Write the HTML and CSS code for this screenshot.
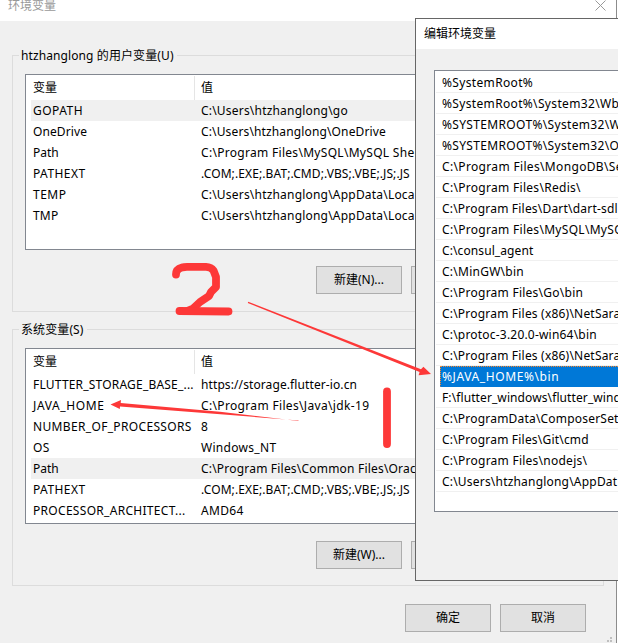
FILE: index.html
```html
<!DOCTYPE html>
<html lang="zh-CN">
<head>
<meta charset="utf-8">
<title>环境变量</title>
<link rel="stylesheet" href="styles.css">
</head>
<body>
<div class="window">
  <header class="titlebar"><span>环境变量</span>
    <svg class="close" width="11" height="11" viewBox="0 0 11 11"><path d="M.5.5l10 10M10.5.5l-10 10" fill="none" stroke="#999"/></svg>
  </header>
  <main class="content">
    <section class="group">
      <h2 class="legend t1">htzhanglong 的用户变量(U)</h2>
      <div class="list">
        <div class="head"><span>变量</span><span>值</span></div>
        <div class="row hot"><span class="t5">GOPATH</span><span class="t2">C:\Users\htzhanglong\go</span></div>
        <div class="row"><span class="t1">OneDrive</span><span class="t15">C:\Users\htzhanglong\OneDrive</span></div>
        <div class="row"><span>Path</span><span class="t3">C:\Program Files\MySQL\MySQL Shell</span></div>
        <div class="row"><span class="t4">PATHEXT</span><span class="t1">.COM;.EXE;.BAT;.CMD;.VBS;.VBE;.JS;.JS</span></div>
        <div class="row"><span class="t5">TEMP</span><span class="t2">C:\Users\htzhanglong\AppData\Loca</span></div>
        <div class="row"><span class="t2">TMP</span><span class="t2">C:\Users\htzhanglong\AppData\Loca</span></div>
      </div>
      <div class="actions"><button>新建(N)...</button><button></button></div>
    </section>
    <section class="group system">
      <h2 class="legend t1">系统变量(S)</h2>
      <div class="list">
        <div class="head"><span>变量</span><span>值</span></div>
        <div class="row"><span class="t2">FLUTTER_STORAGE_BASE_...</span><span class="t1">https://storage.flutter-io.cn</span></div>
        <div class="row"><span class="t6">JAVA_HOME</span><span class="t35">C:\Program Files\Java\jdk-19</span></div>
        <div class="row"><span class="t35">NUMBER_OF_PROCESSORS</span><span>8</span></div>
        <div class="row"><span class="t3">OS</span><span class="t3">Windows_NT</span></div>
        <div class="row hot"><span>Path</span><span class="t2">C:\Program Files\Common Files\Orac</span></div>
        <div class="row"><span class="t4">PATHEXT</span><span class="t1">.COM;.EXE;.BAT;.CMD;.VBS;.VBE;.JS;.JS</span></div>
        <div class="row"><span class="t3">PROCESSOR_ARCHITECT...</span><span class="t3">AMD64</span></div>
      </div>
      <div class="actions"><button>新建(W)...</button><button></button></div>
    </section>
    <footer class="confirm"><button>确定</button><button>取消</button></footer>
  </main>
  <svg class="grip" width="8" height="6" viewBox="0 0 8 6"><path d="M4 0h2v2H4zM1 3h2v2H1zM4 3h2v2H4z" fill="#bfbfbf"/></svg>
</div>

<div class="dialog">
  <header class="dialog-title">编辑环境变量</header>
  <div class="paths">
    <div class="t35">%SystemRoot%</div>
    <div class="t35">%SystemRoot%\System32\Wb</div>
    <div class="t35">%SYSTEMROOT%\System32\W</div>
    <div class="t35">%SYSTEMROOT%\System32\O</div>
    <div class="t35">C:\Program Files\MongoDB\Se</div>
    <div class="t3">C:\Program Files\Redis\</div>
    <div class="t2">C:\Program Files\Dart\dart-sdl</div>
    <div class="t3">C:\Program Files\MySQL\MySQ</div>
    <div class="t1">C:\consul_agent</div>
    <div class="t25">C:\MinGW\bin</div>
    <div class="t25">C:\Program Files\Go\bin</div>
    <div class="t2">C:\Program Files (x86)\NetSara</div>
    <div class="t2">C:\protoc-3.20.0-win64\bin</div>
    <div class="t2">C:\Program Files (x86)\NetSara</div>
    <div class="selected t6">%JAVA_HOME%\bin</div>
    <div class="t1">F:\flutter_windows\flutter_windo</div>
    <div class="t2">C:\ProgramData\ComposerSet</div>
    <div class="t2">C:\Program Files\Git\cmd</div>
    <div class="t25">C:\Program Files\nodejs\</div>
    <div class="t2">C:\Users\htzhanglong\AppDat</div>
  </div>
</div>

<svg class="marks" width="618" height="643" viewBox="0 0 618 643">
  <g fill="none" stroke="#fd3838" stroke-width="7.8" stroke-linecap="round" stroke-linejoin="round">
    <path d="M176 274.5Q176 269 182 267.5Q184 266.8 187 266.8H206Q211 267 213.5 270.5L216 277V287L211 292L209 296L200 302L193 308.5L187 311"/>
    <path d="M179.5 311L228.5 311.5"/>
    <path d="M387 391.5V444"/>
  </g>
  <g fill="#fd3838">
    <path d="M248.2 301.7L421 369.2L423.4 366.7L431 374L418.6 375.3L419.6 372L247.8 303Z"/>
    <path d="M298.5 420.4L120 406.6L119.8 409L110.5 404.5L121 400L120.7 403L220 411.8L298.5 421Z"/>
  </g>
</svg>
</body>
</html>
```
FILE: styles.css
```css
* { box-sizing: border-box; }
body {
  margin: 0;
  width: 618px;
  height: 643px;
  overflow: hidden;
  position: relative;
  background: #fff;
  color: #000;
  font: 12px/21px "Noto Sans", "Noto Sans CJK SC", sans-serif;
}
.window {
  width: 617px;
  height: 643px;
  background: #f0f0f0;
  border-right: 1px solid #8c8c8c;
  position: relative;
}
.titlebar {
  height: 21px;
  padding: 0 10px 0 8px;
  background: #fff;
  color: #999;
  display: flex;
  justify-content: space-between;
  line-height: 12px;
}
.content { padding: 34px 12px 0; }
.group {
  height: 257px;
  margin-bottom: 17px;
  border: 1px solid #dcdcdc;
  padding: 0 12px;
}
.legend {
  width: fit-content;
  height: 18px;
  margin: -9px 0 9px -6px;
  padding: 0 3px 0 2px;
  background: #f0f0f0;
  font: inherit;
  line-height: 18px;
  white-space: nowrap;
}
.list {
  height: 176px;
  background: #fff;
  border: 1px solid #828790;
  padding: 1px 5px;
  overflow: hidden;
}
.head, .row {
  display: grid;
  grid-template-columns: 164px 1fr;
  white-space: nowrap;
}
.head { height: 24px; line-height: 23px; }
.head span:first-child { border-right: 1px solid #e5e5e5; padding-left: 2px; }
.head span:last-child { padding-left: 6px; }
.row { height: 21px; }
.row span:first-child { padding-left: 2px; }
.row span:last-child { padding-left: 6px; }
.hot { background: #f0f0f0; }
.actions { display: flex; gap: 9px; margin: 16px 0 0 291px; }
.system .actions { margin-top: 17px; }
button {
  width: 86px;
  height: 28px;
  flex: none;
  padding: 0;
  background: #e1e1e1;
  border: 1px solid #adadad;
  color: #000;
  font: inherit;
  line-height: 26px;
}
.confirm { display: flex; gap: 9px; padding-left: 393px; margin-top: 18px; }
.grip { position: absolute; right: 2px; bottom: 0; }
.dialog {
  position: absolute;
  left: 415px;
  top: 18px;
  width: 203px;
  height: 563px;
  background: #f0f0f0;
  border: 1px solid #666;
  border-right: 0;
}
.dialog-title { height: 30px; background: #fff; padding-left: 8px; line-height: 30px; }
.paths {
  height: 442px;
  margin: 21px 0 0 18px;
  background: #fff;
  border: 1px solid #828790;
  border-right: 0;
  padding: 1px 0 1px 1px;
  overflow: hidden;
}
.paths div {
  height: 21px;
  padding-left: 6px;
  border-bottom: 1px solid #f0f0f0;
  white-space: nowrap;
}
.paths .selected {
  margin-left: 4px;
  padding-left: 1px;
  background: #0078d7;
  color: #fff;
  line-height: 19px;
  border: 1px dotted #ff8728;
  border-right: 0;
  border-bottom-color: #0078d7;
}
.marks { position: absolute; left: 0; top: 0; }

/* Tracking steps */
.t1 { letter-spacing: .1px; }
.t15 { letter-spacing: .14px; }
.t2 { letter-spacing: .2px; }
.t25 { letter-spacing: .25px; }
.t3 { letter-spacing: .3px; }
.t35 { letter-spacing: .34px; }
.t4 { letter-spacing: .45px; }
.t5 { letter-spacing: .5px; }
.t6 { letter-spacing: .6px; }
```
